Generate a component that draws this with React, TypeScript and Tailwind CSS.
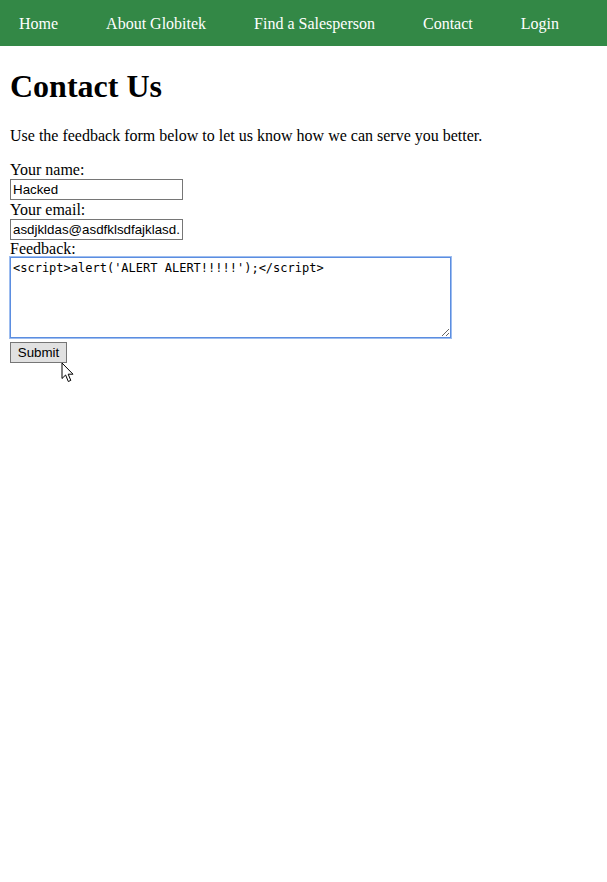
import { ReactNode } from "react";

const navLinks = ["Home", "About Globitek", "Find a Salesperson", "Contact", "Login"];

function Cursor() {
  return (
    <svg
      className="absolute left-[61px] top-[362px]"
      width="16"
      height="22"
      viewBox="0 0 16 22"
    >
      <path
        d="M1 1 L1 16.5 L4.6 13 L7.3 19.5 L9.8 18.4 L7.2 12.2 L12 12.2 Z"
        fill="#fff"
        stroke="#000"
        strokeWidth="1"
        strokeLinejoin="miter"
      />
    </svg>
  );
}

function Label({ h, children }: { h: string; children: ReactNode }) {
  return <div className={h}>{children}</div>;
}

export default function App() {
  return (
    <div className="relative min-h-[882px] bg-white text-black font-['Liberation_Serif',serif] text-[16px]">
      <nav className="h-[46px] bg-[#338846] flex items-center pl-[19px] gap-[48px] text-white">
        {navLinks.map((l) => (
          <a key={l} className="pt-[1px]">
            {l}
          </a>
        ))}
      </nav>

      <main className="px-[10px]">
        <h1 className="text-[32px] font-bold leading-[37px] mt-[22px] mb-[22px]">Contact Us</h1>
        <p className="leading-[18px] mb-[16px]">
          Use the feedback form below to let us know how we can serve you better.
        </p>

        <form className="leading-[18px]">
          <Label h="h-[18px] leading-[18px]">Your name:</Label>
          <input
            readOnly
            defaultValue="Hacked"
            className="block w-[173px] h-[21px] border border-[#767676] px-[2px] bg-white font-['Liberation_Sans',sans-serif] text-[13.33px] text-black outline-none"
          />
          <Label h="h-[19px] leading-[19px]">Your email:</Label>
          <input
            readOnly
            defaultValue="asdjkldas@asdfklsdfajklasd.com"
            className="block w-[173px] h-[21px] border border-[#767676] px-[2px] bg-white font-['Liberation_Sans',sans-serif] text-[13.33px] text-black outline-none"
          />
          <Label h="h-[17px] leading-[17px]">Feedback:</Label>
          <textarea
            readOnly
            defaultValue="<script>alert('ALERT ALERT!!!!!');</script>"
            className="block w-[441px] h-[81px] border border-[#5b8de0] outline outline-1 outline-[#9dbdf0] px-[2px] pt-[2px] bg-white font-['DejaVu_Sans_Mono',monospace] text-[12px] leading-[16px] text-black"
          />
          <button
            type="button"
            className="block mt-[4px] w-[57px] h-[21px] border border-[#767676] bg-[#e1e1e1] font-['Liberation_Sans',sans-serif] text-[13.33px] text-black leading-none"
          >
            Submit
          </button>
        </form>
      </main>

      <Cursor />
    </div>
  );
}
